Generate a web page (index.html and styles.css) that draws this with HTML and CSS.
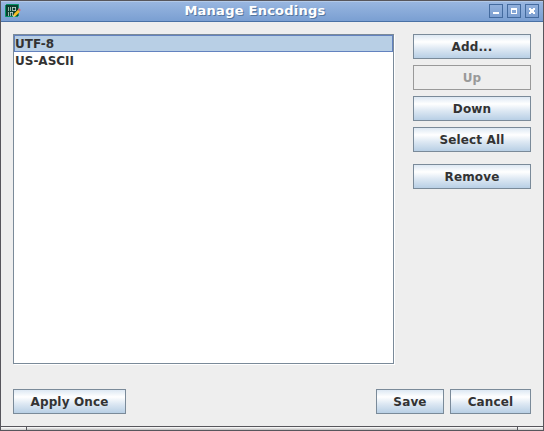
FILE: index.html
```html
<!DOCTYPE html>
<html lang="en">
<head>
<meta charset="utf-8">
<title>Manage Encodings</title>
<link rel="stylesheet" href="styles.css">
</head>
<body>
<div class="window">
  <header class="titlebar">
    <svg class="app-icon" width="16" height="16" viewBox="0 0 16 16">
      <path d="M1.500 1.500h12v11l-1 1h-12v-11z" fill="#0b4030" stroke="#079468"/>
      <path d="M3.500 4v4M5.500 4v4M7 4.500h4M8 7.500h3M7.500 4v4M10.500 4v4M3.500 9v4M5 9.500h3M5.500 9v4M7.500 9v4" stroke="#c8dad2" stroke-opacity=".85" stroke-width=".9" fill="none"/>
      <path d="M8 13.800l1-3 4-4 2 2-4.500 4.500z" fill="#f8be24"/>
      <path d="M12.800 6.500l1-1.500 2 2-1.300 1.500z" fill="#dc6675"/>
      <path d="M8 13.800l.7-2 1.400 1.400z" fill="#f3e4bd"/>
    </svg>
    <h1 class="title">Manage Encodings</h1>
    <div class="controls">
      <span class="control"><svg width="12" height="12" viewBox="0 0 12 12"><path d="M3 7h6v2H3z"/></svg></span>
      <span class="control"><svg width="12" height="12" viewBox="0 0 12 12"><path fill-rule="evenodd" d="M3 3h6v6H3zM4 5v3h4V5z"/></svg></span>
      <span class="control"><svg width="12" height="12" viewBox="0 0 12 12"><path d="M3 3h2v1h2V3h2v2H8v2h1v2H7V8H5v1H3V7h1V5H3z"/></svg></span>
    </div>
  </header>
  <main class="content">
    <div class="upper">
      <ul class="list">
        <li class="item selected">UTF-8</li>
        <li class="item">US-ASCII</li>
      </ul>
      <div class="side">
        <button class="button">Add...</button>
        <button class="button" disabled>Up</button>
        <button class="button">Down</button>
        <button class="button">Select All</button>
        <button class="button remove">Remove</button>
      </div>
    </div>
    <div class="actions">
      <button class="button apply">Apply Once</button>
      <button class="button save">Save</button>
      <button class="button cancel">Cancel</button>
    </div>
  </main>
  <footer class="grip"><span class="corner"></span><span class="edge"></span><span class="corner"></span></footer>
</div>
</body>
</html>
```
FILE: styles.css
```css
* { box-sizing: border-box; }
body {
  margin: 0;
  overflow: hidden;
  font: bold 12px/17px "DejaVu Sans", sans-serif;
  color: #333;
}
.window {
  display: flex;
  flex-direction: column;
  width: 544px;
  height: 431px;
  border: 1px solid #57565c;
  background: #eee;
}
.titlebar {
  display: flex;
  align-items: flex-start;
  height: 21px;
  padding: 2px 4px 0;
  border-top: 1px solid #b2c9e8;
  border-bottom: 1px solid #4a71a5;
  background: linear-gradient(#98b6e0, #7a9fd2);
}
.app-icon { margin-top: -1px; }
.title {
  flex: 1;
  margin: -2px 0 0;
  font-size: 13px;
  line-height: 18px;
  letter-spacing: .25px;
  text-align: center;
  color: #fff;
  text-shadow: 1px 1px 0 #55779f;
}
.controls { display: flex; gap: 4px; }
.control {
  width: 14px;
  height: 14px;
  border: 1px solid #446b9f;
  background: linear-gradient(#91b0dc, #7c9fd1);
}
.control svg { display: block; fill: #fff; }
.content { flex: 1; padding: 12px; }
.upper { display: flex; justify-content: space-between; }
.list {
  width: 381px;
  height: 330px;
  margin: 0;
  padding: 0;
  list-style: none;
  border: 1px solid #7a8a99;
  box-shadow: 1px 1px 0 #fff;
  background: #fff;
}
.item { height: 17px; padding: 1px; line-height: 17px; }
.selected { border: 1px solid #6382bf; padding: 0; background: #b8cfe5; }
.side { display: flex; flex-direction: column; gap: 6px; width: 118px; }
.button {
  height: 25px;
  margin: 0;
  padding: 1px 0 0;
  border: 1px solid #7a8a99;
  border-radius: 0;
  font: bold 12px/22px "DejaVu Sans", sans-serif;
  letter-spacing: .15px;
  color: #333;
  background: linear-gradient(#dde8f3, #fff 30%, #dde8f3 60%, #b8cfe5);
}
.button:disabled { border-color: #999; color: #999; background: #eee; }
.remove { margin-top: 6px; }
.actions { display: flex; gap: 6px; margin-top: 25px; }
.apply { width: 113px; margin-right: auto; }
.save { width: 68px; }
.cancel { width: 81px; }
.grip { display: flex; height: 4px; border-top: 1px solid #57565c; background: #57565c; gap: 1px; }
.corner { width: 25px; background: linear-gradient(#fff, #ccc); }
.edge { flex: 1; background: linear-gradient(#fff, #bbb); }
```
